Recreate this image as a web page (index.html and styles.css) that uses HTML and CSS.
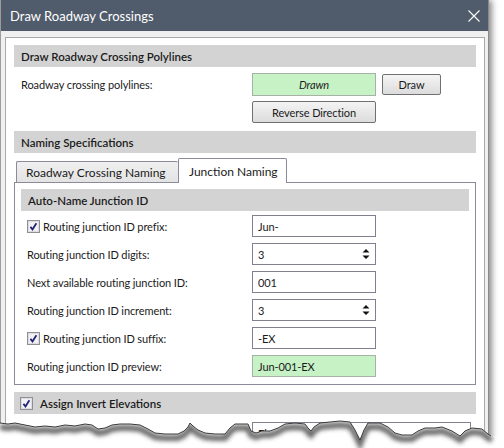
FILE: index.html
```html
<!DOCTYPE html>
<html>
<head>
<meta charset="utf-8">
<link rel="stylesheet" href="styles.css">
</head>
<body>
<div class="window">
  <div class="titlebar">
    <span class="title">Draw Roadway Crossings</span>
    <svg class="close" width="12" height="12" viewBox="0 0 12 12"><path d="M0.5 0.5 L11.5 11.5 M11.5 0.5 L0.5 11.5" stroke="#fff" stroke-width="1.1" fill="none"/></svg>
  </div>
  <div class="client">
    <div class="panel">
      <div class="section">Draw Roadway Crossing Polylines</div>
      <div class="row r-draw">
        <span class="label">Roadway crossing polylines:</span>
        <div class="field green center"><i>Drawn</i></div>
        <button class="btn">Draw</button>
      </div>
      <div class="row r-reverse">
        <span class="label"></span>
        <button class="btn tall">Reverse Direction</button>
      </div>
      <div class="section gap8">Naming Specifications</div>
      <div class="tabs">
        <div class="tab">Roadway Crossing Naming</div>
        <div class="tab active">Junction Naming</div>
      </div>
      <div class="tabpanel">
        <div class="section">Auto-Name Junction ID</div>
        <div class="frow first">
          <span class="flabel chk"><svg class="cb" width="13" height="13" viewBox="0 0 13 13"><rect x="0.5" y="0.5" width="12" height="12" fill="#f2f2f4" stroke="#8f9096"/><rect x="1.5" y="1.5" width="10" height="10" fill="none" stroke="#dcdce2"/><path d="M3.4 6.9 L5.5 9.4 L9.4 3.2" stroke="#23237a" stroke-width="1.8" fill="none"/></svg>Routing junction ID prefix:</span>
          <div class="input">Jun-</div>
        </div>
        <div class="frow">
          <span class="flabel">Routing junction ID digits:</span>
          <div class="input spin">3<svg class="arrows" width="8" height="12" viewBox="0 0 8 12"><path d="M0.5 4.5 L4 1 L7.5 4.5 Z M0.5 7.5 L4 11 L7.5 7.5 Z" fill="#111"/></svg></div>
        </div>
        <div class="frow">
          <span class="flabel">Next available routing junction ID:</span>
          <div class="input">001</div>
        </div>
        <div class="frow">
          <span class="flabel">Routing junction ID increment:</span>
          <div class="input spin">3<svg class="arrows" width="8" height="12" viewBox="0 0 8 12"><path d="M0.5 4.5 L4 1 L7.5 4.5 Z M0.5 7.5 L4 11 L7.5 7.5 Z" fill="#111"/></svg></div>
        </div>
        <div class="frow">
          <span class="flabel chk"><svg class="cb" width="13" height="13" viewBox="0 0 13 13"><rect x="0.5" y="0.5" width="12" height="12" fill="#f2f2f4" stroke="#8f9096"/><rect x="1.5" y="1.5" width="10" height="10" fill="none" stroke="#dcdce2"/><path d="M3.4 6.9 L5.5 9.4 L9.4 3.2" stroke="#23237a" stroke-width="1.8" fill="none"/></svg>Routing junction ID suffix:</span>
          <div class="input">-EX</div>
        </div>
        <div class="frow">
          <span class="flabel">Routing junction ID preview:</span>
          <div class="input green">Jun-001-EX</div>
        </div>
      </div>
      <div class="section check"><svg class="cb" width="13" height="13" viewBox="0 0 13 13"><rect x="0.5" y="0.5" width="12" height="12" fill="#f2f2f4" stroke="#8f9096"/><rect x="1.5" y="1.5" width="10" height="10" fill="none" stroke="#dcdce2"/><path d="M3.4 6.9 L5.5 9.4 L9.4 3.2" stroke="#23237a" stroke-width="1.8" fill="none"/></svg>Assign Invert Elevations</div>
      <div class="row last">
        <span class="label">Elevation method:</span>
        <div class="input wide">Elevation</div>
      </div>
    </div>
  </div>
  <svg class="torn" width="505" height="38" viewBox="0 410 505 38">
    <defs>
      <clipPath id="below"><path d="M0,423 8,424 15,423 25,425 35,427 45,426 55,427 65,425 75,426 85,424 92,425 98,429 105,428 112,425 120,424 130,424 140,425 148,429 155,433 165,434 178,434 184,431 188,427 190,423 193,426 198,430 205,433 215,434 225,434 230,428 235,424 248,424 251,431 256,433 262,431 270,431 278,428 285,424 295,423 305,424 308,428 311,431 314,427 320,423 340,421 350,422 355,430 360,440 364,430 368,423 380,423 388,427 395,433 402,435 412,435 418,431 425,428 435,428 442,427 452,431 460,436 465,431 472,428 482,429 488,434 492,436 505,436 L505,448 L0,448 Z"/></clipPath>
      <filter id="blur" x="-10%" y="-100%" width="120%" height="300%"><feGaussianBlur stdDeviation="2"/></filter>
    </defs>
    <path d="M0,423 8,424 15,423 25,425 35,427 45,426 55,427 65,425 75,426 85,424 92,425 98,429 105,428 112,425 120,424 130,424 140,425 148,429 155,433 165,434 178,434 184,431 188,427 190,423 193,426 198,430 205,433 215,434 225,434 230,428 235,424 248,424 251,431 256,433 262,431 270,431 278,428 285,424 295,423 305,424 308,428 311,431 314,427 320,423 340,421 350,422 355,430 360,440 364,430 368,423 380,423 388,427 395,433 402,435 412,435 418,431 425,428 435,428 442,427 452,431 460,436 465,431 472,428 482,429 488,434 492,436 505,436 L505,448 L0,448 Z" fill="#fff"/>
    <g clip-path="url(#below)">
      <polyline transform="translate(0,4)" filter="url(#blur)" fill="none" stroke="#444" stroke-opacity="0.8" stroke-width="6" points="0,423 8,424 15,423 25,425 35,427 45,426 55,427 65,425 75,426 85,424 92,425 98,429 105,428 112,425 120,424 130,424 140,425 148,429 155,433 165,434 178,434 184,431 188,427 190,423 193,426 198,430 205,433 215,434 225,434 230,428 235,424 248,424 251,431 256,433 262,431 270,431 278,428 285,424 295,423 305,424 308,428 311,431 314,427 320,423 340,421 350,422 355,430 360,440 364,430 368,423 380,423 388,427 395,433 402,435 412,435 418,431 425,428 435,428 442,427 452,431 460,436 465,431 472,428 482,429 488,434 492,436"/>
    </g>
    <polyline fill="none" stroke="#3a3a3a" stroke-width="1" points="0,423 8,424 15,423 25,425 35,427 45,426 55,427 65,425 75,426 85,424 92,425 98,429 105,428 112,425 120,424 130,424 140,425 148,429 155,433 165,434 178,434 184,431 188,427 190,423 193,426 198,430 205,433 215,434 225,434 230,428 235,424 248,424 251,431 256,433 262,431 270,431 278,428 285,424 295,423 305,424 308,428 311,431 314,427 320,423 340,421 350,422 355,430 360,440 364,430 368,423 380,423 388,427 395,433 402,435 412,435 418,431 425,428 435,428 442,427 452,431 460,436 465,431 472,428 482,429 488,434 491,436"/>
  </svg>
</div>
</body>
</html>
```
FILE: styles.css
```css
* { box-sizing: border-box; }
html, body {
  margin: 0;
  height: 448px;
  overflow: hidden;
  background: #fff;
}
body {
  font-family: Lato, "Open Sans", sans-serif;
  font-size: 11px;
  letter-spacing: -0.1px;
  color: #1b1b1b;
}
.window {
  position: relative;
  width: 489px;
  height: 448px;
  background: #f0f0f0;
  border-left: 1px solid #9c9c9c;
  border-right: 1px solid #8a8a8a;
  box-shadow: 3px 0 6px rgba(0, 0, 0, 0.45);
}
.titlebar {
  height: 31px;
  background: #505b6b;
  color: #fff;
  display: flex;
  align-items: center;
  justify-content: space-between;
  padding: 0 8px 0 9px;
  font-size: 13px;
  letter-spacing: 0;
}
.client {
  padding: 6px 3px 0 4px;
}
.panel {
  background: #fff;
  border: 1px solid #a9a9a9;
  padding: 7px 8px 0 8px;
  height: 420px;
}
.section {
  height: 22px;
  background: #d3d3d3;
  display: flex;
  align-items: center;
  padding-left: 7px;
  font-weight: 600;
  font-size: 11.5px;
  letter-spacing: 0;
}
.gap8 { margin-top: 8px; }
.row {
  display: grid;
  grid-template-columns: 232px 124px 59px;
  column-gap: 6px;
  align-items: center;
}
.label { padding-left: 7px; }
.r-draw { margin-top: 6px; }
.r-reverse { margin-top: 5px; }
.field {
  height: 23px;
  border: 1px solid #a6b2a6;
  display: flex;
  align-items: center;
}
.center { justify-content: center; }
.green { background: #c6f2c6; }
.btn {
  height: 21px;
  border: 1px solid #707070;
  border-radius: 2px;
  background: linear-gradient(#f4f4f4, #dcdcdc);
  font: inherit;
  letter-spacing: inherit;
  color: inherit;
  padding: 0;
}
.btn.tall { height: 22px; }
.tabs {
  display: flex;
  align-items: flex-end;
  margin-top: 5px;
  margin-bottom: -1px;
  padding-left: 2px;
  position: relative;
  z-index: 1;
  font-size: 12px;
  letter-spacing: 0;
}
.tab {
  height: 21px;
  margin-bottom: 1px;
  width: 162px;
  border: 1px solid #8b8b9b;
  border-bottom: none;
  border-right: none;
  border-radius: 2px 2px 0 0;
  background: linear-gradient(#f0f0f0, #e3e3e3);
  display: flex;
  align-items: center;
  padding-left: 9px;
}
.tab.active {
  height: 25px;
  margin-bottom: 0;
  width: 109px;
  background: #fff;
  border-right: 1px solid #8b8b9b;
  padding-left: 10px;
}
.tabpanel {
  border: 1px solid #8b8b9b;
  padding: 6px 6px 7px 6px;
}
.frow {
  display: grid;
  grid-template-columns: 231px 124px;
  height: 22px;
  margin-top: 6px;
  align-items: center;
}
.frow.first { margin-top: 4px; }
.flabel {
  padding-left: 6px;
  display: flex;
  align-items: center;
}
.chk .cb { margin-right: 3px; }
.input {
  height: 22px;
  border: 1px solid #80808f;
  background: #fff;
  padding-left: 5px;
  display: flex;
  align-items: center;
}
.input.green { background: #c6f2c6; border-color: #a6b2a6; }
.spin { justify-content: space-between; padding-right: 5px; }
.section.check {
  margin-top: 7px;
  padding-left: 6px;
  font-size: 11.5px;
}
.section.check .cb { margin-right: 7px; }
.row.last {
  margin-top: 8px;
  grid-template-columns: 232px 219px;
}
.input.wide { width: 219px; }
.torn {
  position: absolute;
  left: -1px;
  top: 410px;
}
```
